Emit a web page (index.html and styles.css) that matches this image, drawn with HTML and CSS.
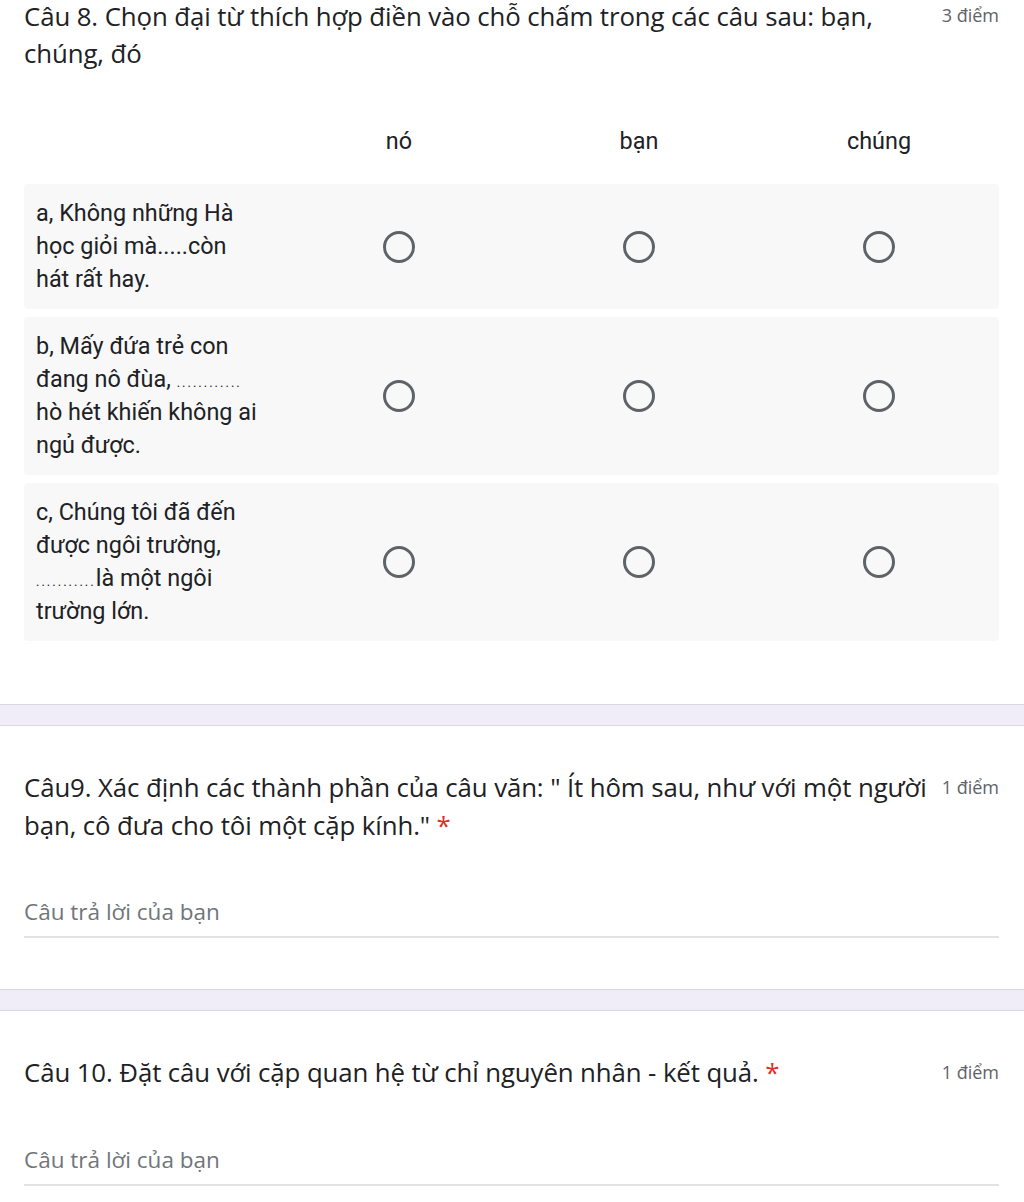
FILE: index.html
```html
<!DOCTYPE html>
<html lang="vi">
<head>
<meta charset="utf-8">
<title>Form</title>
<link rel="stylesheet" href="styles.css">
</head>
<body>
<section class="question q8">
  <div class="q-head">
    <div class="q-title">Câu 8. Chọn đại từ thích hợp điền vào chỗ chấm trong các câu sau: bạn,<br>chúng, đó</div>
    <div class="q-points">3 điểm</div>
  </div>
  <div class="grid">
    <div class="grid-head">
      <div class="label-cell"></div>
      <div class="col">nó</div>
      <div class="col">bạn</div>
      <div class="col">chúng</div>
    </div>
    <div class="grid-row">
      <div class="label-cell">a, Không những Hà học giỏi mà.....còn hát rất hay.</div>
      <div class="col"><span class="radio"></span></div>
      <div class="col"><span class="radio"></span></div>
      <div class="col"><span class="radio"></span></div>
    </div>
    <div class="grid-row">
      <div class="label-cell">b, Mấy đứa trẻ con đang nô đùa, <span class="dots">............</span> hò hét khiến không ai ngủ được.</div>
      <div class="col"><span class="radio"></span></div>
      <div class="col"><span class="radio"></span></div>
      <div class="col"><span class="radio"></span></div>
    </div>
    <div class="grid-row">
      <div class="label-cell">c, Chúng tôi đã đến được ngôi trường, <span class="dots">...........</span>là một ngôi trường lớn.</div>
      <div class="col"><span class="radio"></span></div>
      <div class="col"><span class="radio"></span></div>
      <div class="col"><span class="radio"></span></div>
    </div>
  </div>
</section>
<div class="band"></div>
<section class="question q9">
  <div class="q-head">
    <div class="q-title">Câu9. Xác định các thành phần của câu văn: " Ít hôm sau, như với một người bạn, cô đưa cho tôi một cặp kính." <span class="req">*</span></div>
    <div class="q-points">1 điểm</div>
  </div>
  <div class="answer">Câu trả lời của bạn</div>
</section>
<div class="band"></div>
<section class="question q10">
  <div class="q-head">
    <div class="q-title">Câu 10. Đặt câu với cặp quan hệ từ chỉ nguyên nhân - kết quả. <span class="req">*</span></div>
    <div class="q-points">1 điểm</div>
  </div>
  <div class="answer">Câu trả lời của bạn</div>
</section>
</body>
</html>
```
FILE: styles.css
```css
html, body {
  margin: 0;
  padding: 0;
  background: #ffffff;
}
body {
  font-family: Roboto, "Noto Sans", Arial, sans-serif;
  color: #202124;
  width: 1024px;
}
.question {
  padding: 0 25px 0 24px;
}
.q8 {
  padding-top: 0;
  padding-bottom: 63px;
}
.q9 {
  padding-top: 42px;
  padding-bottom: 51px;
}
.q10 {
  padding-top: 42px;
  padding-bottom: 18px;
}
.q-head {
  display: flex;
  align-items: flex-start;
  gap: 9px;
}
.q-title {
  flex: 1;
  font-family: "Open Sans", Roboto, sans-serif;
  font-size: 25.8px;
  line-height: 38px;
  letter-spacing: -0.1px;
}
.q8 .q-title {
  margin-top: -2px;
  line-height: 37px;
}
.req {
  color: #d93025;
}
.q-points {
  flex: none;
  font-family: "Open Sans", Roboto, sans-serif;
  font-size: 18px;
  line-height: 38px;
  color: #5f6368;
}
.q8 .q-points {
  line-height: 30px;
}
.grid {
  margin-top: 53px;
  display: flex;
  flex-direction: column;
  gap: 8px;
}
.grid-head,
.grid-row {
  display: grid;
  grid-template-columns: 255px 240px 240px 240px;
  align-items: center;
}
.grid-head {
  font-size: 23.4px;
  line-height: 33px;
  margin-bottom: 18px;
}
.grid-row {
  background: #f8f8f8;
  border-radius: 4px;
  padding: 13px 0;
  font-size: 23.4px;
  line-height: 33px;
}
.label-cell {
  padding-left: 12px;
  padding-right: 17px;
}
.dots {
  font-size: 13px;
  line-height: 1;
  letter-spacing: 2px;
}
.col {
  display: flex;
  justify-content: center;
  align-items: center;
}
.radio {
  display: block;
  width: 26px;
  height: 26px;
  border: 3px solid #5f6368;
  border-radius: 50%;
}
.answer {
  margin-top: 53px;
  font-family: "Open Sans", Roboto, sans-serif;
  font-size: 22.5px;
  line-height: 30px;
  color: #70757a;
  padding-bottom: 9px;
  border-bottom: 2px solid #e3e3e6;
}
.q10 .answer {
  margin-top: 54px;
}
.band {
  height: 20px;
  background: #f0edf9;
  border-top: 1px solid #d9d7e0;
  border-bottom: 1px solid #d9d7e0;
}
```
